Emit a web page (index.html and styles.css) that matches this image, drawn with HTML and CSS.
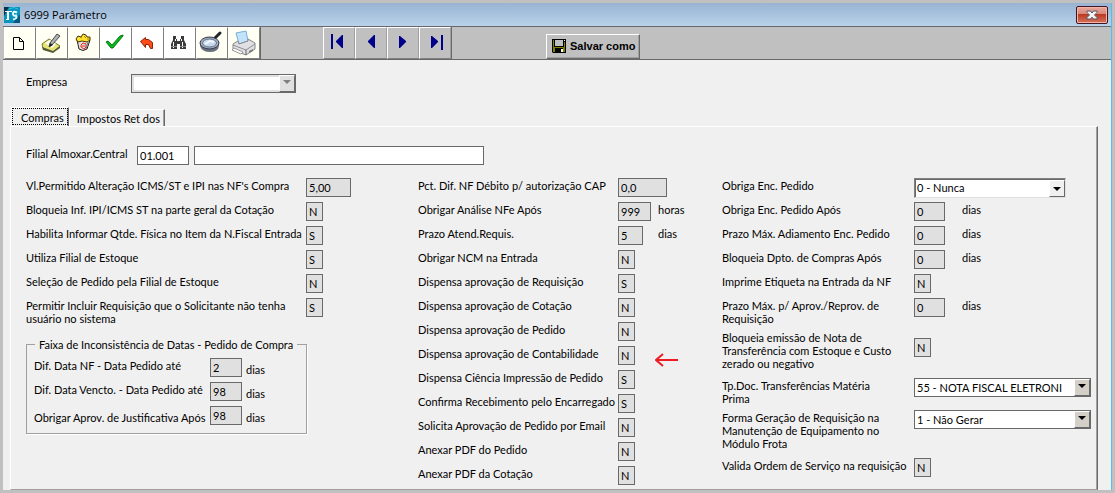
FILE: index.html
```html
<!DOCTYPE html>
<html lang="pt-BR">
<head>
<meta charset="utf-8">
<title>6999 Parâmetro</title>
<link rel="stylesheet" href="styles.css">
</head>
<body>
<div class="window">
  <header class="titlebar">
    <svg class="app-icon" width="16" height="16" viewBox="0 0 16 16" aria-hidden="true">
      <rect width="16" height="16" fill="#0a93bd"/><path d="M0 0h5L0 9z" fill="#0b2f45"/><path d="M9 16L16 7v9z" fill="#065a82"/><path d="M5 2q5-3 9 0" stroke="#31c3e6" fill="none"/>
      <path d="M1 4.500h7M2 12.500h3" stroke="#fff"/><path d="M4 5v8" stroke="#fff" stroke-width="2"/><path d="M13 5.500q-4-2-4 1t3 2q2 3-3 4" stroke="#e8faff" stroke-width="2" fill="none"/>
    </svg>
    <h1 class="title">6999 Parâmetro</h1>
    <button class="close" aria-label="Fechar"><svg width="12" height="10" viewBox="0 0 12 10"><path d="M1 1h3.500L6 3l1.500-2H11v1.500L8.500 5 11 7.500V9H7.500L6 7.200 4.500 9H1V7.500L3.500 5 1 2.500z" fill="#f4f4f4" stroke="#545869"/></svg></button>
  </header>

  <nav class="toolbar" aria-label="Ferramentas">
    <div class="group">
      <button class="tool cream" aria-label="Novo"><svg viewBox="0 0 30 30"><path d="M8.500 9.500h6l4 4v8h-10zM14.500 9.500v4h4" fill="#fffff4" stroke="#000"/></svg></button>
      <button class="tool cream" aria-label="Editar"><svg viewBox="0 0 30 30"><path d="M5 16l7-5 11 7-7 6-10-4z" fill="#e7e47a" stroke="#77772c"/><path d="M5 19l11 4 7-5v2l-7 5-10-3z" fill="#555a38"/><path d="M8 15l5-3 6 4-4 4z" fill="#fffef0"/><path d="M12 19l1-4L20 6l3 2-8 9z" fill="#aeb3b5" stroke="#4a4a42"/><path d="M12 19l1-4 3 2z" fill="#222"/></svg></button>
      <button class="tool cream" aria-label="Excluir"><svg viewBox="0 0 30 30"><path d="M8 12l2 9q4 3 8 0l3-9z" fill="#e6e0dc" stroke="#222"/><path d="M7 11l2-3 3 1 2-3 3 1 1 2 3 0 0 3-3 2-5-1-4 1z" fill="#ffe32e" stroke="#44320a"/><path d="M11 9l2 1M15 8l2 2M18 11l2 0" stroke="#b48300"/><path d="M12 17l2-2 3 1 0 3-2 2-3-2zM13 18h3" fill="none" stroke="#e02d22"/><path d="M19 14l-2 7" stroke="#777"/></svg></button>
      <button class="tool" aria-label="Confirmar"><svg viewBox="0 0 30 30"><path d="M5 14l2-1 4 4L19 8l3-1v1L12 20h-2z" fill="#08b51c" stroke="#087f15"/></svg></button>
      <button class="tool" aria-label="Desfazer"><svg viewBox="0 0 30 30"><path d="M7.500 13.500l5-4v2h3l4 3v6h-2l-2-4h-3v3z" fill="#ff4b18" stroke="#8e2208"/></svg></button>
      <button class="tool" aria-label="Localizar"><svg viewBox="0 0 30 30"><path d="M8 8h3v3h1v2h3v-2h1V8h3v4l2 4v5h-6v-5h-3v5H6v-5l2-4z" fill="#3b3b3b"/><path d="M8.500 14v6M17.500 14v6M10.500 11v2M16.500 11v2" stroke="#fff"/><path d="M6 18.500h6M15 18.500h6" stroke="#888"/></svg></button>
      <button class="tool cream" aria-label="Consultar"><svg viewBox="0 0 30 30"><path d="M17 11l6-6" stroke="#20242d" stroke-width="3" stroke-linecap="round"/><path d="M3 15v3q2 6 10 6t9-6v-3z" fill="#6a7282"/><ellipse cx="12.500" cy="15" rx="9.500" ry="6" fill="#a3aebf" stroke="#343947"/><ellipse cx="12.500" cy="15" rx="7" ry="4" fill="#c8d9ed" stroke="#66738a"/><path d="M8 16l5-3 4 1" stroke="#f3f8ff" stroke-width="2" fill="none"/></svg></button>
      <button class="tool cream" aria-label="Imprimir"><svg viewBox="0 0 30 30"><path d="M7 5l10-2 2 10-9 3z" fill="#c3e3fb" stroke="#78aeda"/><path d="M4 16l5-3 1 3 9-3v-2l7 4v6l-9 6-13-5z" fill="#e0e0e4" stroke="#888"/><path d="M4 17l13 5 9-6" fill="none" stroke="#8c8c94"/><path d="M17 22v5" stroke="#666"/><path d="M5 20l9 4-2 2-9-4z" fill="#fff" stroke="#999"/><path d="M20 23l4-2v2l-4 2z" fill="#777"/></svg></button>
    </div>
    <div class="group nav">
      <button class="tool grey" aria-label="Primeiro"><svg viewBox="0 0 30 30"><path d="M7 6h2v15H7zM19 7v13h-1l-6-6v-1l6-6z" fill="#00008b"/></svg></button>
      <button class="tool grey" aria-label="Anterior"><svg viewBox="0 0 30 30"><path d="M19 7v13h-1l-6-6v-1l6-6z" fill="#00008b"/></svg></button>
      <button class="tool grey" aria-label="Próximo"><svg viewBox="0 0 30 30"><path d="M11 8v12h1l6-6v-1l-6-5z" fill="#00008b"/></svg></button>
      <button class="tool grey" aria-label="Último"><svg viewBox="0 0 30 30"><path d="M11 8v12h1l6-6v-1l-6-5zM21 7h2v15h-2z" fill="#00008b"/></svg></button>
    </div>
    <button class="save"><svg width="14" height="14" viewBox="0 0 14 14" aria-hidden="true"><path d="M0 0h14v14H1L0 13z" fill="#000"/><path d="M1 1h1v7h10V3h1v10h-2V9H3v4H1z" fill="#808000"/><path d="M3 1h8v6H3z" fill="#c0c0c0"/><path d="M12 1h1v1h-1zM9 10h2v3H9z" fill="#fff"/></svg>Salvar como</button>
  </nav>

  <main class="content">
    <div class="company">
      <label for="empresa">Empresa</label>
      <span class="combo disabled"><select id="empresa" disabled><option></option></select><span class="arrow"></span></span>
    </div>

    <div class="tabs" role="tablist">
      <button class="tab active" role="tab" aria-selected="true">Compras</button>
      <button class="tab" role="tab" aria-selected="false">Impostos Ret dos</button>
    </div>

    <section class="panel" role="tabpanel">
      <div class="branch">
        <label for="filial">Filial Almoxar.Central</label>
        <input class="field open w52" id="filial" value="01.001">
        <input class="field open w290" aria-label="Nome da filial">
      </div>

      <div class="columns">
        <div class="column first">
          <div class="row"><label for="a1">Vl.Permitido Alteração ICMS/ST e IPI nas NF's Compra</label><input class="field w45" id="a1" value="5,00"></div>
          <div class="row"><label for="a2">Bloqueia Inf. IPI/ICMS ST na parte geral da Cotação</label><input class="field w17" id="a2" value="N"></div>
          <div class="row"><label for="a3">Habilita Informar Qtde. Física no Item da N.Fiscal Entrada</label><input class="field w17" id="a3" value="S"></div>
          <div class="row"><label for="a4">Utiliza Filial de Estoque</label><input class="field w17" id="a4" value="S"></div>
          <div class="row"><label for="a5">Seleção de Pedido pela Filial de Estoque</label><input class="field w17" id="a5" value="N"></div>
          <div class="row"><label for="a6">Permitir Incluir Requisição que o Solicitante não tenha<br>usuário no sistema</label><input class="field w17" id="a6" value="S"></div>
          <fieldset class="dates">
            <legend>Faixa de Inconsistência de Datas - Pedido de Compra</legend>
            <div class="row"><label for="d1">Dif. Data NF - Data Pedido até</label><input class="field w32" id="d1" value="2"><span class="unit">dias</span></div>
            <div class="row"><label for="d2">Dif. Data Vencto. - Data Pedido até</label><input class="field w32" id="d2" value="98"><span class="unit">dias</span></div>
            <div class="row"><label class="low" for="d3">Obrigar Aprov. de Justificativa Após</label><input class="field w32" id="d3" value="98"><span class="unit">dias</span></div>
          </fieldset>
        </div>

        <div class="column second">
          <div class="row"><label for="b1">Pct. Dif. NF Débito p/ autorização CAP</label><input class="field w49" id="b1" value="0,0"></div>
          <div class="row"><label for="b2">Obrigar Análise NFe Após</label><input class="field w33" id="b2" value="999"><span class="unit">horas</span></div>
          <div class="row"><label for="b3">Prazo Atend.Requis.</label><input class="field w25" id="b3" value="5"><span class="unit">dias</span></div>
          <div class="row"><label for="b4">Obrigar NCM na Entrada</label><input class="field w17" id="b4" value="N"></div>
          <div class="row"><label for="b5">Dispensa aprovação de Requisição</label><input class="field w17" id="b5" value="S"></div>
          <div class="row"><label for="b6">Dispensa aprovação de Cotação</label><input class="field w17" id="b6" value="N"></div>
          <div class="row"><label for="b7">Dispensa aprovação de Pedido</label><input class="field w17" id="b7" value="N"></div>
          <div class="row"><label for="b8">Dispensa aprovação de Contabilidade</label><input class="field w17" id="b8" value="N"><svg class="pointer" width="24" height="14" viewBox="0 0 24 14" aria-hidden="true"><path d="M8 1L1 7l7 6M1 7h22" fill="none" stroke="#ed1c24" stroke-width="2"/></svg></div>
          <div class="row"><label for="b9">Dispensa Ciência Impressão de Pedido</label><input class="field w17" id="b9" value="S"></div>
          <div class="row"><label for="b10">Confirma Recebimento pelo Encarregado</label><input class="field w17" id="b10" value="S"></div>
          <div class="row"><label for="b11">Solicita Aprovação de Pedido por Email</label><input class="field w17" id="b11" value="N"></div>
          <div class="row"><label for="b12">Anexar PDF do Pedido</label><input class="field w17" id="b12" value="N"></div>
          <div class="row"><label for="b13">Anexar PDF da Cotação</label><input class="field w17" id="b13" value="N"></div>
        </div>

        <div class="column third">
          <div class="row"><label for="c1">Obriga Enc. Pedido</label><span class="combo sunken"><select id="c1"><option>0 - Nunca</option></select><span class="arrow"></span></span></div>
          <div class="row"><label for="c2">Obriga Enc. Pedido Após</label><input class="field w31" id="c2" value="0"><span class="unit">dias</span></div>
          <div class="row"><label for="c3">Prazo Máx. Adiamento Enc. Pedido</label><input class="field w31" id="c3" value="0"><span class="unit">dias</span></div>
          <div class="row"><label for="c4">Bloqueia Dpto. de Compras Após</label><input class="field w31" id="c4" value="0"><span class="unit">dias</span></div>
          <div class="row"><label for="c5">Imprime Etiqueta na Entrada da NF</label><input class="field w17" id="c5" value="N"></div>
          <div class="row double"><label for="c6">Prazo Máx. p/ Aprov./Reprov. de<br>Requisição</label><input class="field w31" id="c6" value="0"><span class="unit">dias</span></div>
          <div class="row triple"><label for="c7">Bloqueia emissão de Nota de<br>Transferência com Estoque e Custo<br>zerado ou negativo</label><input class="field w17 mid" id="c7" value="N"></div>
          <div class="row double"><label for="c8">Tp.Doc. Transferências Matéria<br>Prima</label><span class="combo wide"><select id="c8"><option>55 - NOTA FISCAL ELETRONI</option></select><span class="arrow"></span></span></div>
          <div class="row triple"><label for="c9">Forma Geração de Requisição na<br>Manutenção de Equipamento no<br>Módulo Frota</label><span class="combo wide"><select id="c9"><option>1 - Não Gerar</option></select><span class="arrow"></span></span></div>
          <div class="row"><label for="c10">Valida Ordem de Serviço na requisição</label><input class="field w17" id="c10" value="N"></div>
        </div>
      </div>
    </section>
  </main>
</div>
</body>
</html>
```

FILE: styles.css
```css
* { box-sizing: border-box; }

body {
  margin: 0;
  background: #c0c0c0;
  color: #000;
  font: 11px/13px Lato, Roboto, "Liberation Sans", sans-serif;
}

button, input, select { font: inherit; color: inherit; margin: 0; border-radius: 0; }
button { padding: 0; }

.window {
  margin: 3px 3px 0;
  background: #f0f0f0;
  border-right: 1px solid #55bfe5;
}

/* Title bar */
.titlebar {
  display: flex;
  align-items: center;
  gap: 4px;
  height: 24px;
  padding: 0 3px 0 1px;
  background: linear-gradient(#98b4d2, #b9d1ea);
  border-bottom: 1px solid #696969;
}
.title { flex: 1; margin: 0; font: 11px/16px "Open Sans", "Noto Sans", sans-serif; }
.close {
  display: flex;
  align-items: center;
  justify-content: center;
  width: 32px;
  height: 18px;
  border: 1px solid #431422;
  border-radius: 2px;
  background: linear-gradient(#e9a99d 0, #d98675 45%, #b93a22 46%, #d6745c);
  box-shadow: inset 0 0 0 1px #f0b6aa;
}

/* Toolbar */
.toolbar {
  display: flex;
  align-items: flex-start;
  height: 33px;
  padding-left: 1px;
  background: #c0c0c0;
  border-bottom: 1px solid #696969;
}
.group { display: flex; border-right: 1px solid #696969; }
.nav { margin-left: 62px; }
.tool {
  width: 32px;
  height: 32px;
  border: 1px solid;
  border-color: #fff #808080 #808080 #fff;
  background: #fff;
}
.tool svg { display: block; width: 30px; height: 30px; }
.cream { background: #fffff4; }
.grey { background: #c0c0c0; border-right-color: #a0a0a0; }
.save {
  display: flex;
  align-items: center;
  gap: 4px;
  width: 94px;
  height: 25px;
  margin: 7px 0 0 94px;
  padding: 0 0 2px 5px;
  border: 1px solid;
  border-color: #fff #696969 #696969 #fff;
  box-shadow: inset -1px -1px #a0a0a0;
  background: #c0c0c0;
  font: bold 11px/14px "Liberation Sans", sans-serif;
  white-space: nowrap;
}

/* Shared form parts */
.field {
  height: 19px;
  padding: 0 2px 1px;
  border: 1px solid #696969;
  background: #e0e0e0;
  outline: none;
}
.open { background: #fff; }
.w17 { width: 17px; }
.w25 { width: 25px; }
.w31 { width: 31px; }
.w32 { width: 32px; }
.w33 { width: 33px; }
.w45 { width: 45px; }
.w49 { width: 49px; }
.w52 { width: 52px; }
.w290 { width: 290px; }

.combo { display: flex; justify-self: start; height: 19px; border: 1px solid #696969; background: #fff; }
.combo select {
  flex: 1;
  min-width: 0;
  padding: 0 2px 1px;
  border: 0;
  background: transparent;
  appearance: none;
  outline: none;
}
.arrow {
  display: flex;
  justify-content: center;
  width: 16px;
  padding-top: 4px;
  border: 1px solid;
  border-color: #fff #696969 #696969 #fff;
  background: #d4d0c8;
}
.arrow::before {
  content: "";
  width: 0;
  height: 0;
  border: 4px solid transparent;
  border-top-color: #000;
  border-bottom: 0;
}
.disabled { width: 165px; box-shadow: inset 0 0 0 2px #e0e0e0; }
.disabled .arrow { background: #e0e0e0; }
.disabled .arrow::before { border-top-color: #808080; }
.sunken {
  width: 152px;
  height: 20px;
  border-color: #808080 #e0e0e0 #e0e0e0 #808080;
  box-shadow: inset 1px 1px #696969;
}
.sunken .arrow { background: #f0f0f0; margin-top: 1px; padding-top: 6px; }
.wide { width: 177px; }

/* Body */
.content { padding: 14px 13px 0 7px; }
.company { display: flex; padding-left: 16px; }
.company label { width: 105px; padding-top: 1px; }

.tabs { display: flex; align-items: flex-end; height: 33px; padding-left: 1px; }
.tab {
  height: 17px;
  padding: 1px 4px 0 7px;
  border: 1px solid;
  border-color: #fff #696969 transparent #fff;
  border-bottom: 0;
  background: #f0f0f0;
  box-shadow: inset -1px 0 #a0a0a0;
  white-space: nowrap;
}
.active { height: 19px; padding: 1px 4px 0 9px; outline: 1px dotted #000; outline-offset: -2px; }

.panel {
  padding: 19px 0 4px 15px;
  border: 1px solid;
  border-color: #fff #696969 #a0a0a0 #fff;
  box-shadow: inset -1px 0 #a0a0a0;
}
.branch { display: flex; gap: 5px; }
.branch label { width: 106px; padding-top: 1px; white-space: nowrap; }

.columns { display: grid; grid-template-columns: 392fr 304fr 375fr; padding-top: 13px; }
.row { display: flex; align-items: flex-start; min-height: 24px; }
.row label { flex: none; padding-top: 1px; white-space: nowrap; }
.first .row label { width: 280px; }
.second .row, .third .row { display: grid; grid-template-columns: 200px 40px 1fr; align-items: start; }
.third .row { grid-template-columns: 192px 48px 1fr; }
.second .row:last-child { min-height: 0; }
.row.double { min-height: 32px; }
.row.triple { min-height: 48px; }
.mid { margin-top: 8px; }
.unit { padding-top: 1px; }
.third .combo { grid-column: 2 / 4; }
.pointer { margin: 7px 0 0 -3px; }

.dates {
  width: 281px;
  min-width: 0;
  margin: 13px 0 0;
  padding: 7px 7px 3px;
  border: 1px solid #a0a0a0;
  box-shadow: 1px 1px #fff;
}
.dates legend { padding: 0 4px; margin-left: 1px; white-space: nowrap; }
.first .dates .row label { width: 176px; }
.first .dates .row .low { padding-top: 5px; }
.dates .unit { margin-left: 4px; padding-top: 5px; }
```
